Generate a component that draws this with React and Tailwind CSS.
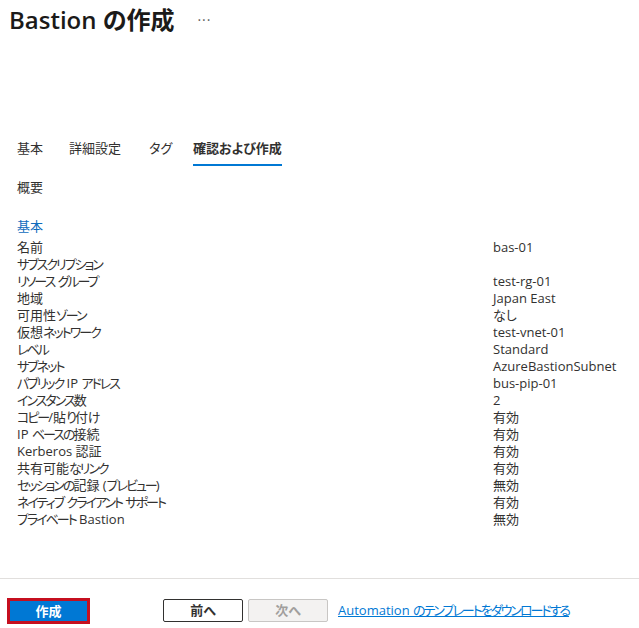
import React from "react";

const rows = [
  ["名前", "bas-01"],
  ["サブスクリプション", ""],
  ["リソース グループ", "test-rg-01"],
  ["地域", "Japan East"],
  ["可用性ゾーン", "なし"],
  ["仮想ネットワーク", "test-vnet-01"],
  ["レベル", "Standard"],
  ["サブネット", "AzureBastionSubnet"],
  ["パブリック IP アドレス", "bus-pip-01"],
  ["インスタンス数", "2"],
  ["コピー/貼り付け", "有効"],
  ["IP ベースの接続", "有効"],
  ["Kerberos 認証", "有効"],
  ["共有可能なリンク", "有効"],
  ["セッションの記録 (プレビュー)", "無効"],
  ["ネイティブ クライアント サポート", "有効"],
  ["プライベート Bastion", "無効"],
];

function Kana({ text }) {
  const parts = text.split(/([\u3040-\u30ff]+)/);
  return (
    <>
      {parts.map((p, i) =>
        /^[\u3040-\u30ff]+$/.test(p) ? (
          <span key={i} className="tracking-[-2px]">{p}</span>
        ) : (
          <React.Fragment key={i}>{p}</React.Fragment>
        )
      )}
    </>
  );
}

export default function App() {
  return (
    <div
      className="h-[628px] w-[639px] flex flex-col bg-white text-[#323130] text-[13px] [font-feature-settings:'palt'] overflow-hidden"
      style={{ fontFamily: '"Open Sans", "Noto Sans CJK JP", sans-serif' }}
    >
      <div className="flex-1">
        <div className="pl-[9px] pt-[4px] flex items-center">
          <h1 className="text-[24px] leading-[32px] font-semibold text-[#1b1a19]">Bastion の作成</h1>
          <span className="ml-[23px] text-[#605e5c] text-[14px] leading-[32px] tracking-[1px]">···</span>
        </div>

        <div className="mt-[102px] pl-[17px] flex items-end">
          <div className="w-[52px] pb-[8px] leading-[20px]">基本</div>
          <div className="w-[80px] pb-[8px] leading-[20px]">詳細設定</div>
          <div className="w-[44px] pb-[8px] leading-[20px]">タグ</div>
          <div className="pb-[6px] leading-[20px] font-semibold border-b-2 border-[#0078d4]">確認および作成</div>
        </div>

        <div className="mt-[11px] pl-[17px] leading-[20px]">概要</div>
        <div className="mt-[19px] pl-[17px] leading-[20px] text-[#0f6cbd]">基本</div>

        <div className="mt-[3px] pl-[17px] grid grid-cols-[476px_1fr] leading-[17px]">
          {rows.map(([k, v], i) => (
            <React.Fragment key={i}>
              <div className="h-[17px] whitespace-nowrap"><Kana text={k} /></div>
              <div className="h-[17px] whitespace-nowrap">{v}</div>
            </React.Fragment>
          ))}
        </div>
      </div>

      <div className="h-[50px] border-t border-[#e1dfdd] flex items-start pt-[19px] pl-[7px]">
        <div className="border-[3px] border-[#c50f1f] p-0">
          <button className="w-[77px] h-[20px] bg-[#0078d4] text-white font-bold text-[13px] leading-[20px] flex items-center justify-center">
            作成
          </button>
        </div>
        <button className="ml-[73px] mt-[1px] w-[80px] h-[23px] border border-[#323130] rounded-[2px] bg-white font-semibold text-[13px] leading-[21px] text-[#323130]">
          前へ
        </button>
        <button className="ml-[5px] mt-[1px] w-[80px] h-[23px] border border-[#c8c6c4] rounded-[2px] bg-[#f3f2f1] font-semibold text-[13px] leading-[21px] text-[#a19f9d]">
          次へ
        </button>
        <a className="ml-[10px] mt-[1px] leading-[23px] text-[#0078d4] underline text-[13px] whitespace-nowrap" href="#">
          <Kana text="Automation のテンプレートをダウンロードする" />
        </a>
      </div>
    </div>
  );
}
